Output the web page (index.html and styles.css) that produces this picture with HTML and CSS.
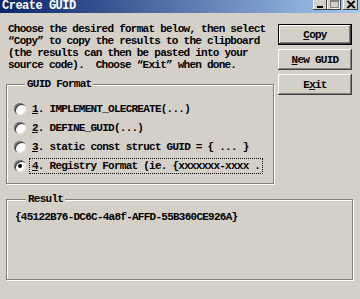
FILE: index.html
```html
<!DOCTYPE html>
<html lang="en">
  <head>
    <meta charset="UTF-8" />
    <title>Create GUID</title>
    <link rel="stylesheet" href="styles.css">
  </head>
  <body>
    <div class="window">
      <div class="titlebar">
        <span class="title">Create GUID</span>
        <div class="caption-buttons">
          <span class="cap-btn">
            <svg width="14" height="10" viewBox="0 0 14 10"><rect x="4" y="6" width="6" height="2" fill="#000"/></svg>
          </span>
          <span class="cap-btn">
            <svg width="14" height="10" viewBox="0 0 14 10"><rect x="3.5" y="0.5" width="8" height="7" fill="none" stroke="#808080"/><rect x="3" y="0" width="9" height="2" fill="#808080"/><path d="M4.5 8.5h8v-7" fill="none" stroke="#fff"/></svg>
          </span>
          <span class="cap-btn close">
            <svg width="15" height="10" viewBox="0 0 15 10"><path d="M4 1l7 7M11 1l-7 7M5 1l7 7M12 1l-7 7" stroke="#000" stroke-width="1.2"/></svg>
          </span>
        </div>
      </div>
      <div class="client">
        <div class="top">
          <div class="left">
            <p class="intro">Choose the desired format below, then select<br>“Copy” to copy the results to the clipboard<br>(the results can then be pasted into your<br>source code).  Choose “Exit” when done.</p>
            <fieldset class="group format">
              <legend>GUID Format</legend>
              <label class="option"><span class="radio"></span><span class="text"><u>1</u>. IMPLEMENT_OLECREATE(...)</span></label>
              <label class="option"><span class="radio"></span><span class="text"><u>2</u>. DEFINE_GUID(...)</span></label>
              <label class="option"><span class="radio"></span><span class="text"><u>3</u>. static const struct GUID = { ... }</span></label>
              <label class="option checked"><span class="radio"></span><span class="text focus"><u>4</u>. Registry Format (ie. {xxxxxxx-xxxx .</span></label>
            </fieldset>
          </div>
          <div class="actions">
            <button class="btn default"><u>C</u>opy</button>
            <button class="btn"><u>N</u>ew GUID</button>
            <button class="btn">E<u>x</u>it</button>
          </div>
        </div>
        <fieldset class="group result">
          <legend>Result</legend>
          <div class="guid">{45122B76-DC6C-4a8f-AFFD-55B360CE926A}</div>
        </fieldset>
      </div>
    </div>
  </body>
</html>
```

FILE: styles.css
```css
body {
  margin: 0;
  padding: 0;
  background: #d4d0c8;
}
.window {
  width: 360px;
  height: 299px;
  overflow: hidden;
  background: #d4d0c8;
  color: #000;
  font-family: "Liberation Mono", monospace;
  font-size: 11px;
  font-weight: bold;
  line-height: 12px;
  letter-spacing: -0.75px;
}
.titlebar {
  height: 13px;
  display: flex;
  align-items: flex-start;
  background: linear-gradient(90deg, #0a246a, #a6caf0);
}
.title {
  color: #fff;
  font-size: 12px;
  line-height: 12px;
  letter-spacing: -0.5px;
  padding-left: 2px;
}
.caption-buttons {
  margin-left: auto;
  display: flex;
  padding-right: 2px;
}
.cap-btn {
  width: 14px;
  height: 10px;
  background: #d4d0c8;
  box-shadow: inset -1px -1px #404040, inset 1px 0 #fff;
}
.cap-btn svg { display: block; }
.cap-btn.close {
  width: 15px;
  margin-left: 2px;
}
.top {
  display: flex;
}
.left {
  width: 266px;
}
.intro {
  margin: 10px 0 0 8px;
  white-space: pre;
}
.group {
  margin: 0;
  padding: 0;
  min-width: 0;
  border: 1px solid #808080;
  box-shadow: 1px 1px 0 #fff, inset 1px 1px 0 #fff;
}
.group legend {
  margin-left: 11px;
  padding: 0 2px;
  background: #d4d0c8;
}
.format {
  width: 259px;
  margin: 7px 0 0 6px;
  padding: 9px 0 8px 7px;
}
.option {
  display: flex;
  align-items: center;
  height: 19px;
}
.radio {
  flex: none;
  width: 12px;
  height: 12px;
  border-radius: 50%;
  background: #fff;
  box-shadow: inset 1px 1px 0 #808080, inset 2px 2px 0 #404040, inset -1px -1px 0 #e8e6e1;
  position: relative;
}
.checked .radio::after {
  content: "";
  position: absolute;
  left: 4px;
  top: 4px;
  width: 4px;
  height: 4px;
  border-radius: 50%;
  background: #000;
}
.text {
  margin-left: 3px;
  padding: 1px 2px;
  border: 1px dotted transparent;
  white-space: nowrap;
}
.text.focus {
  border-color: #000;
}
.actions {
  display: flex;
  flex-direction: column;
  gap: 4px;
  margin: 11px 0 0 12px;
}
.btn {
  width: 74px;
  height: 21px;
  padding: 0;
  border: none;
  background: #d4d0c8;
  font: inherit;
  letter-spacing: inherit;
  color: #000;
  box-shadow: inset -1px -1px #404040, inset 1px 1px #fff, inset -2px -2px #808080;
}
.btn.default {
  box-shadow: inset 0 0 0 1px #000, inset -2px -2px #404040, inset 2px 2px #fff, inset -3px -3px #808080;
}
.result {
  width: 347px;
  height: 87px;
  margin: 9px 0 0 6px;
  padding: 6px 0 0 8px;
  box-sizing: border-box;
}
```
